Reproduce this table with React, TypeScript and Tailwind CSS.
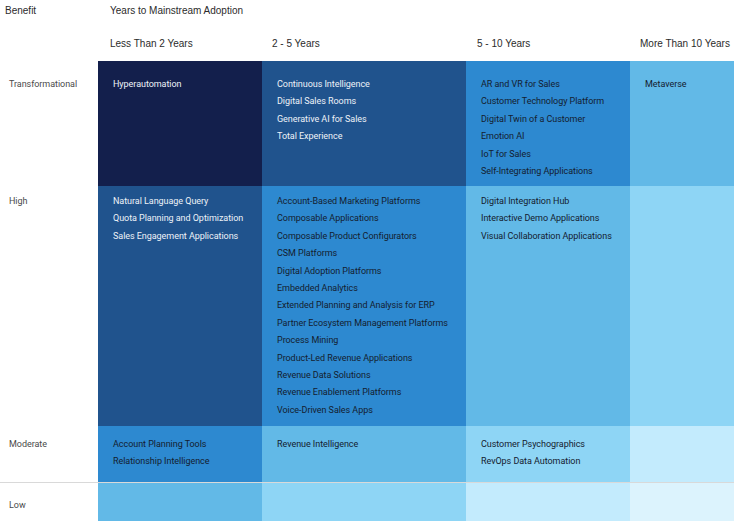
const columns = ["Less Than 2 Years", "2 - 5 Years", "5 - 10 Years", "More Than 10 Years"];

// cell colours, darkest to lightest
const shades = [
  "bg-[#131f4c] text-[#eef2f8]",
  "bg-[#20538d] text-[#eef2f8]",
  "bg-[#2d89d0] text-[#14202f]",
  "bg-[#62b9e7] text-[#14202f]",
  "bg-[#8ed5f5] text-[#14202f]",
  "bg-[#c3ebfd] text-[#14202f]",
  "bg-[#dcf3fd] text-[#14202f]",
];

const rows = [
  {
    label: "Transformational",
    height: "h-[125px]",
    pad: "pt-[15px]",
    border: "",
    cells: [
      { shade: 0, items: ["Hyperautomation"] },
      { shade: 1, items: ["Continuous Intelligence", "Digital Sales Rooms", "Generative AI for Sales", "Total Experience"] },
      {
        shade: 2,
        items: [
          "AR and VR for Sales",
          "Customer Technology Platform",
          "Digital Twin of a Customer",
          "Emotion AI",
          "IoT for Sales",
          "Self-Integrating Applications",
        ],
      },
      { shade: 3, items: ["Metaverse"] },
    ],
  },
  {
    label: "High",
    height: "h-[240px]",
    pad: "pt-[7px]",
    border: "",
    cells: [
      { shade: 1, items: ["Natural Language Query", "Quota Planning and Optimization", "Sales Engagement Applications"] },
      {
        shade: 2,
        items: [
          "Account-Based Marketing Platforms",
          "Composable Applications",
          "Composable Product Configurators",
          "CSM Platforms",
          "Digital Adoption Platforms",
          "Embedded Analytics",
          "Extended Planning and Analysis for ERP",
          "Partner Ecosystem Management Platforms",
          "Process Mining",
          "Product-Led Revenue Applications",
          "Revenue Data Solutions",
          "Revenue Enablement Platforms",
          "Voice-Driven Sales Apps",
        ],
      },
      { shade: 3, items: ["Digital Integration Hub", "Interactive Demo Applications", "Visual Collaboration Applications"] },
      { shade: 4, items: [] },
    ],
  },
  {
    label: "Moderate",
    height: "h-[56px]",
    pad: "pt-[10px]",
    border: "",
    cells: [
      { shade: 2, items: ["Account Planning Tools", "Relationship Intelligence"] },
      { shade: 3, items: ["Revenue Intelligence"] },
      { shade: 4, items: ["Customer Psychographics", "RevOps Data Automation"] },
      { shade: 5, items: [] },
    ],
  },
  {
    label: "Low",
    height: "h-[60px]",
    pad: "pt-[14px]",
    border: "border-t border-[#d9d9d9]",
    cells: [
      { shade: 3, items: [] },
      { shade: 4, items: [] },
      { shade: 5, items: [] },
      { shade: 6, items: [] },
    ],
  },
];

const colWidths = ["w-[164px]", "w-[204px]", "w-[164px]", "flex-1"];
const headPad = ["pl-[12px]", "pl-[10px]", "pl-[11px]", "pl-[10px]"];

export default function App() {
  return (
    <div className="w-[734px] h-[521px] overflow-hidden bg-white font-['Liberation_Sans',Arial,sans-serif]">
      {/* title row */}
      <div className="flex h-[21px] items-center text-[10px] text-[#2b2b2b]">
        <div className="w-[98px] pl-[5px]">Benefit</div>
        <div className="pl-[12px]">Years to Mainstream Adoption</div>
      </div>

      {/* column headers */}
      <div className="flex h-[40px] text-[10px] leading-[12px] text-[#2b2b2b]">
        <div className="w-[98px]" />
        {columns.map((c, i) => (
          <div key={c} className={`${colWidths[i]} ${headPad[i]} pt-[17px]`}>
            {c}
          </div>
        ))}
      </div>

      {/* matrix */}
      <div className="flex flex-col font-['Roboto',sans-serif] text-[9px] leading-[17.4px] tracking-[-0.05px]">
        {rows.map((row) => (
          <div key={row.label} className={`flex ${row.height} ${row.border}`}>
            <div className={`w-[98px] pl-[9px] text-[#4a4a4a] ${row.pad}`}>{row.label}</div>
            {row.cells.map((cell, i) => (
              <div key={i} className={`${colWidths[i]} ${shades[cell.shade]} ${row.pad} pl-[15px]`}>
                {cell.items.map((item) => (
                  <div key={item} className="whitespace-nowrap">
                    {item}
                  </div>
                ))}
              </div>
            ))}
          </div>
        ))}
      </div>
    </div>
  );
}
